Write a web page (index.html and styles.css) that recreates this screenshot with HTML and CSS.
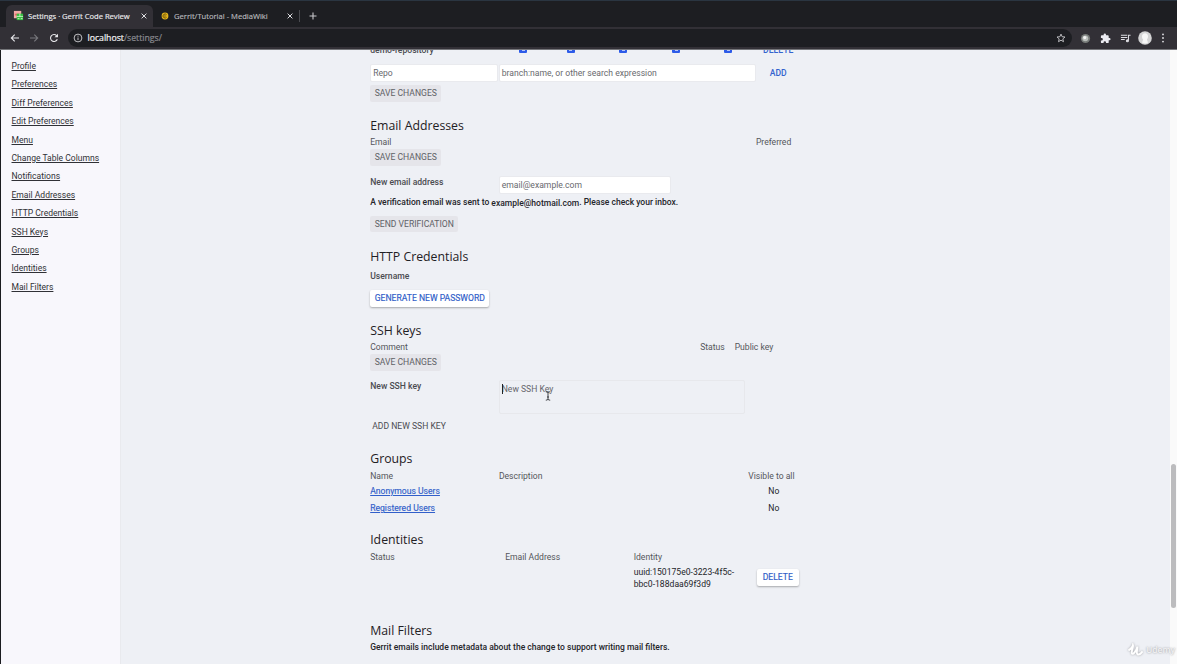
FILE: index.html
```html
<!DOCTYPE html>
<html lang="en">
<head>
<meta charset="utf-8">
<title>Settings · Gerrit Code Review</title>
<link rel="stylesheet" href="styles.css">
</head>
<body>
<header class="browser">
  <div class="tabs">
    <div class="tab active">
      <svg class="fav" viewBox="0 0 12 12"><path fill="#f2aaa8" d="M1 1h8v8H1z"/><path fill="#e76a67" d="M2 4h5v2H2z"/><path fill="#35bf3f" d="M4 4h7v7H4z"/><path stroke="#d8f5d6" stroke-width=".9" d="M4 7h7M5 9.4h2M8.5 9.4h2M7.5 4v3"/></svg>
      <span class="title">Settings · Gerrit Code Review</span>
      <svg class="close" viewBox="0 0 8 8"><path d="M1.600 1.600l4.800 4.800M6.400 1.600L1.600 6.400"/></svg>
    </div>
    <div class="tab second">
      <svg class="fav small" viewBox="0 0 8 8"><circle cx="4" cy="4" r="3.4" fill="#e5b51d"/><path d="M5.6 2.8A2 2 0 1 0 5.6 5.2" fill="none" stroke="#5f4808" stroke-width=".9"/><circle cx="4" cy="4" r=".8" fill="#6f550b"/></svg>
      <span class="title">Gerrit/Tutorial - MediaWiki</span>
      <svg class="close" viewBox="0 0 8 8"><path d="M1.600 1.600l4.800 4.800M6.400 1.600L1.600 6.400"/></svg>
    </div>
    <span class="divider"></span>
    <svg class="plus" viewBox="0 0 8 8"><path d="M4 .5v7M.5 4h7"/></svg>
  </div>
  <div class="toolbar">
    <svg class="nav" viewBox="0 0 10 10"><path d="M9 5H1.5M4.7 1.6L1.3 5l3.4 3.4"/></svg>
    <svg class="nav dim" viewBox="0 0 10 10"><path d="M1 5h7.5M5.3 1.6L8.7 5 5.3 8.4"/></svg>
    <svg class="nav" viewBox="0 0 10 10"><path d="M8.3 6.2A3.5 3.5 0 1 1 7.6 2.6"/><path d="M9 .8v3.5H5.5z" fill="#e6e6e9" stroke="none"/></svg>
    <div class="omnibox">
      <svg class="info" viewBox="0 0 10 10"><circle cx="5" cy="5" r="3.9"/><path d="M5 4.5v2.6M5 2.7v1"/></svg>
      <span class="url">localhost<i>/settings/</i></span>
      <svg class="star" viewBox="0 0 10 10"><path d="M5 1.1l1.1 2.6 2.9.3-2.2 1.9.7 2.8L5 7.2 2.5 8.700l.7-2.8L1 4l2.9-.3z"/></svg>
    </div>
    <div class="actions">
      <svg viewBox="0 0 12 12"><circle cx="6" cy="6" r="5" fill="#777b79"/><circle cx="5.8" cy="5.8" r="3.200" fill="#b9bdba"/><circle cx="5.2" cy="5" r="1.700" fill="#f2f2f2"/></svg>
      <svg viewBox="0 0 24 24"><path fill="#ececf2" d="M20.500 11H19V7a2 2 0 0 0-2-2h-4V3.500a2.500 2.500 0 0 0-5 0V5H4a2 2 0 0 0-2 2v3.800h1.500a2.700 2.700 0 0 1 0 5.400H2V20a2 2 0 0 0 2 2h3.800v-1.500a2.700 2.700 0 0 1 5.400 0V22H17a2 2 0 0 0 2-2v-4h1.500a2.500 2.500 0 0 0 0-5z"/></svg>
      <svg viewBox="0 0 12 12" fill="none" stroke="#dedee3" stroke-width="1.100"><path d="M1 2.500h7M1 4.800h7M1 7.100h4.200M9.300 8.200V2.500h2.200"/><circle cx="8.100" cy="8.400" r="1.100" fill="#dedee3"/></svg>
      <svg class="avatar" viewBox="0 0 14 14"><circle cx="7" cy="7" r="6.800" fill="#d3d3d4"/><path fill="#f6f6f6" d="M7 2.300c2 0 3 1.400 3 3.100 0 1.500-.7 2.500-1.100 3.200L10 11.500c-1.300 1.200-4.300 1.200-6 0l1.200-2.900C4.600 7.900 4 6.900 4 5.400c0-1.700 1-3.100 3-3.100z"/></svg>
      <svg class="dots" viewBox="0 0 4 12" fill="#e4e4e8"><circle cx="2" cy="2.400" r=".9"/><circle cx="2" cy="6" r=".9"/><circle cx="2" cy="9.600" r=".9"/></svg>
    </div>
  </div>
</header>
<div class="page">
  <nav class="side">
    <a>Profile</a><a>Preferences</a><a>Diff Preferences</a><a>Edit Preferences</a><a>Menu</a><a>Change Table Columns</a><a>Notifications</a><a>Email Addresses</a><a>HTTP Credentials</a><a>SSH Keys</a><a>Groups</a><a>Identities</a><a>Mail Filters</a>
  </nav>
  <main class="content">
    <section class="watched">
      <div class="repo-row">
        <span class="strong">demo-repository</span><b class="check"></b><b class="check"></b><b class="check"></b><b class="check"></b><b class="check"></b><span class="link-btn">DELETE</span>
      </div>
      <div class="new-watch">
        <div class="field repo">Repo</div><div class="field">branch:name, or other search expression</div><span class="link-btn">ADD</span>
      </div>
      <span class="btn">SAVE CHANGES</span>
    </section>
    <section class="emails">
      <h2>Email Addresses</h2>
      <div class="head cols-email"><span>Email</span><span>Preferred</span></div>
      <span class="btn">SAVE CHANGES</span>
      <div class="form-row email-row"><label>New email address</label><div class="field">email@example.com</div></div>
      <p class="sent">A verification email was sent to <span class="address">example@hotmail.com</span>. Please check your inbox.</p>
      <span class="btn send">SEND VERIFICATION</span>
    </section>
    <section class="http">
      <h2>HTTP Credentials</h2>
      <label>Username</label>
      <span class="btn raised">GENERATE NEW PASSWORD</span>
    </section>
    <section class="ssh">
      <h2>SSH keys</h2>
      <div class="head cols-ssh"><span>Comment</span><span>Status</span><span>Public key</span></div>
      <span class="btn">SAVE CHANGES</span>
      <div class="form-row key-row"><label>New SSH key</label><div class="area"><i class="caret"></i><span>New SSH Key</span>
        <svg class="pointer" viewBox="0 0 6 10"><path d="M.8.8Q3 .8 3 2v6Q3 9.200.8 9.200M5.200.8Q3 .8 3 2M3 8q0 1.200 2.200 1.200M2 6h2"/></svg></div></div>
      <span class="flat">ADD NEW SSH KEY</span>
    </section>
    <section class="groups">
      <h2>Groups</h2>
      <div class="head cols-group"><span>Name</span><span>Description</span><span>Visible to all</span></div>
      <div class="cols-group item"><a>Anonymous Users</a><span></span><span>No</span></div>
      <div class="cols-group item"><a>Registered Users</a><span></span><span>No</span></div>
    </section>
    <section class="identities">
      <h2>Identities</h2>
      <div class="head cols-id"><span>Status</span><span>Email Address</span><span>Identity</span></div>
      <div class="cols-id identity"><span></span><span></span><span>uuid:150175e0-3223-4f5c-<br>bbc0-188daa69f3d9</span><span class="btn raised">DELETE</span></div>
    </section>
    <section class="filters">
      <h2>Mail Filters</h2>
      <p>Gerrit emails include metadata about the change to support writing mail filters.</p>
    </section>
  </main>
  <div class="scroll"><div class="thumb"></div></div>
</div>
<div class="watermark"><svg viewBox="0 0 18 14"><path d="M1.500 7.500C4 6 6 3.500 6.300 2 7 4 4 9 5.300 10.800 7 12.500 10.500 6 11 3.500 11.200 6 9.500 10 11 11.400c1.500 1 4-1 5.500-3"/></svg><span>Udemy</span></div>
</body>
</html>
```
FILE: styles.css
```css
* { box-sizing: border-box; }
body {
  margin: 0;
  width: 1177px;
  height: 664px;
  overflow: hidden;
  position: relative;
  background: #eef0f5;
  color: #24252a;
  font: 8.6px/12px Roboto, sans-serif;
}
h2, p { margin: 0; }
svg { display: block; flex: none; }

/* Browser frame */
.browser { height: 50px; background: #1d1e22; border-top: 1px solid #2a3541; border-bottom: 1px solid #747579; }
.tabs { height: 26px; display: flex; align-items: center; padding: 4px 0 0 6px; font: 7.6px/12px "Open Sans", sans-serif; }
.tab { height: 22px; display: flex; align-items: center; padding-bottom: 1px; color: #b9babe; }
.tab.active { width: 147px; padding-left: 7px; background: #323036; border-radius: 6px 6px 0 0; color: #ececef; }
.tab.second { width: 146px; padding-left: 8px; }
.fav { width: 11px; height: 11px; margin-right: 4px; }
.fav.small { width: 8px; height: 8px; margin-right: 5px; }
.title { flex: 1; white-space: nowrap; -webkit-text-stroke: .15px; }
.close { width: 8px; height: 8px; margin-right: 5.5px; fill: none; stroke: #dedee2; stroke-width: 1; }
.divider { width: 1px; height: 12px; background: #4a4b50; }
.plus { width: 8px; height: 8px; margin-left: 9px; stroke: #c9c9cd; stroke-width: 1.1; }
.toolbar { height: 22px; display: flex; align-items: center; background: #323036; padding-left: 9.5px; }
.nav { width: 10px; height: 10px; margin-right: 9.5px; fill: none; stroke: #e6e6e9; stroke-width: 1.1; }
.nav.dim { stroke: #77777c; }
.omnibox { flex: none; width: 1004px; height: 18px; padding: 0 6px 0 5px; display: flex; align-items: center; background: #1d1e22; border-radius: 9px; }
.info { width: 10px; height: 10px; fill: none; stroke: #d0d0d4; stroke-width: .9; }
.url { flex: 1; margin-left: 4.5px; font: 8.7px/12px "Open Sans", sans-serif; color: #f0f0f2; -webkit-text-stroke: .2px; }
.url i { font-style: normal; color: #898a90; }
.star { width: 10px; height: 10px; fill: none; stroke: #c7c7cb; stroke-width: .9; }
.actions { display: flex; align-items: center; gap: 9px; margin-left: 7.500px; }
.actions svg { width: 11px; height: 11px; }
.actions .avatar { width: 14px; height: 14px; margin-left: -2px; }
.actions .dots { width: 4px; height: 12px; }

/* Page shell */
.page { display: flex; height: 614px; border-left: 1px solid #1b1c1f; }
.side { width: 120px; flex: none; background: #f8f7fc; border-right: 1px solid #e9eaee; padding: 7px 0 0 10.5px; display: flex; flex-direction: column; }
.side a { height: 18.4px; line-height: 18.6px; text-decoration: underline; color: #303136; white-space: nowrap; font-size: 8.55px; }
.content { flex: none; width: 1049px; padding-left: 249.2px; overflow: hidden; }
.scroll { flex: 1; background: #fafafa; padding: 414px 0 0 1px; }
.thumb { width: 5px; height: 144px; border-radius: 3px; background: #bcbcbe; }

/* Shared pieces */
section { width: 430px; }
h2 { height: 20px; font: 400 12.3px/22px "Open Sans", sans-serif; color: #1f2024; }
.head { color: #55565b; height: 14px; line-height: 14px; }
label, .strong { font-weight: 500; color: #4b4c51; }
.btn { display: block; width: max-content; height: 16.500px; line-height: 16.500px; padding: 0 4.500px; border-radius: 2px; background: #e5e5ea; color: #606166; }
.btn.raised { background: #fff; color: #2e5cc8; box-shadow: 0 1px 2px rgba(0, 0, 0, .3); -webkit-text-stroke: .15px; }
.link-btn { color: #3463ce; font-weight: 500; text-align: center; }
.field { height: 18px; line-height: 16px; padding: 0 2px; background: #fff; border: 1px solid #e9eaee; border-radius: 2px; color: #68696e; white-space: nowrap; }
.form-row { display: grid; grid-template-columns: 128.5px auto; justify-content: start; }

/* Watched repositories */
.watched { height: 65px; margin-top: -7px; }
.repo-row { height: 14px; line-height: 14px; display: grid; grid-template-columns: 129px 48px 47px 58px 48px 56px 44px; justify-items: center; }
.repo-row .strong { justify-self: start; }
.check { width: 8px; height: 8px; margin-top: 2px; border-radius: 1px; background: #2d5be8; display: flex; align-items: center; justify-content: center; }
.check::after { content: ""; width: 3px; height: 3px; margin-top: 1px; background: #b6c6f7; }
.new-watch { margin-top: 7px; height: 18px; display: grid; grid-template-columns: 128px 258px 44px; align-items: center; }
.new-watch .field:nth-child(2) { margin-left: .5px; }
.watched .btn { margin-top: 3px; }

/* Sections */
.emails { height: 138px; padding-top: 7px; }
.cols-email { display: grid; grid-template-columns: 385.7px auto; }
.email-row { margin-top: 10px; height: 19px; }
.email-row .field { width: 172px; }
.sent { margin-top: 1.500px; font-size: 8.52px; font-weight: 500; white-space: nowrap; }
.address { position: relative; top: 1px; }
.send { margin-top: 7.500px; }
.http { height: 74px; }
.http label { display: block; margin-top: 4px; }
.http .btn { margin-top: 8px; }
.ssh { height: 128px; }
.cols-ssh { display: grid; grid-template-columns: 330px 34.500px auto; }
.key-row { margin-top: 9.500px; height: 34px; }
.area { position: relative; width: 246px; height: 34px; padding: 2px; border: 1px solid #e7e8ec; border-radius: 2px; color: #66676c; }
.caret { position: absolute; left: 2px; top: 3px; width: 1px; height: 10px; background: #222; }
.pointer { position: absolute; left: 45px; top: 10px; width: 6px; height: 10px; fill: none; stroke: #303136; stroke-width: .9; }
.flat { display: block; margin: 5.500px 0 0 2px; color: #4b4c51; }
.groups { height: 81px; }
.cols-group { display: grid; grid-template-columns: 128.7px 242px 66px; }
.cols-group > :last-child { text-align: center; white-space: nowrap; }
.groups .head { margin-top: 1px; }
.groups .head > :last-child { margin-left: -5px; }
.item { height: 17px; line-height: 16px; }
.item a { color: #315fca; text-decoration: underline; -webkit-text-stroke: .15px; }
.identities { height: 91px; }
.cols-id { display: grid; grid-template-columns: 135px 128.500px 123px auto; justify-content: start; }
.identities .head { margin-top: 1px; }
.identity { padding-top: 1.500px; }
.identity .btn { margin-top: 3.500px; padding: 0 6px; }
.filters p { margin-top: 1px; font-size: 8.52px; font-weight: 500; }

.watermark { position: absolute; left: 1127px; top: 643px; display: flex; align-items: center; gap: 2px; color: #f1f1f3; font: 600 8.5px/14px "Open Sans", sans-serif; text-shadow: 0 0 2px #909195; }
.watermark svg { width: 17px; height: 14px; fill: none; stroke: #fff; stroke-width: 2; filter: drop-shadow(0 0 1px #a0a1a5); }
```
